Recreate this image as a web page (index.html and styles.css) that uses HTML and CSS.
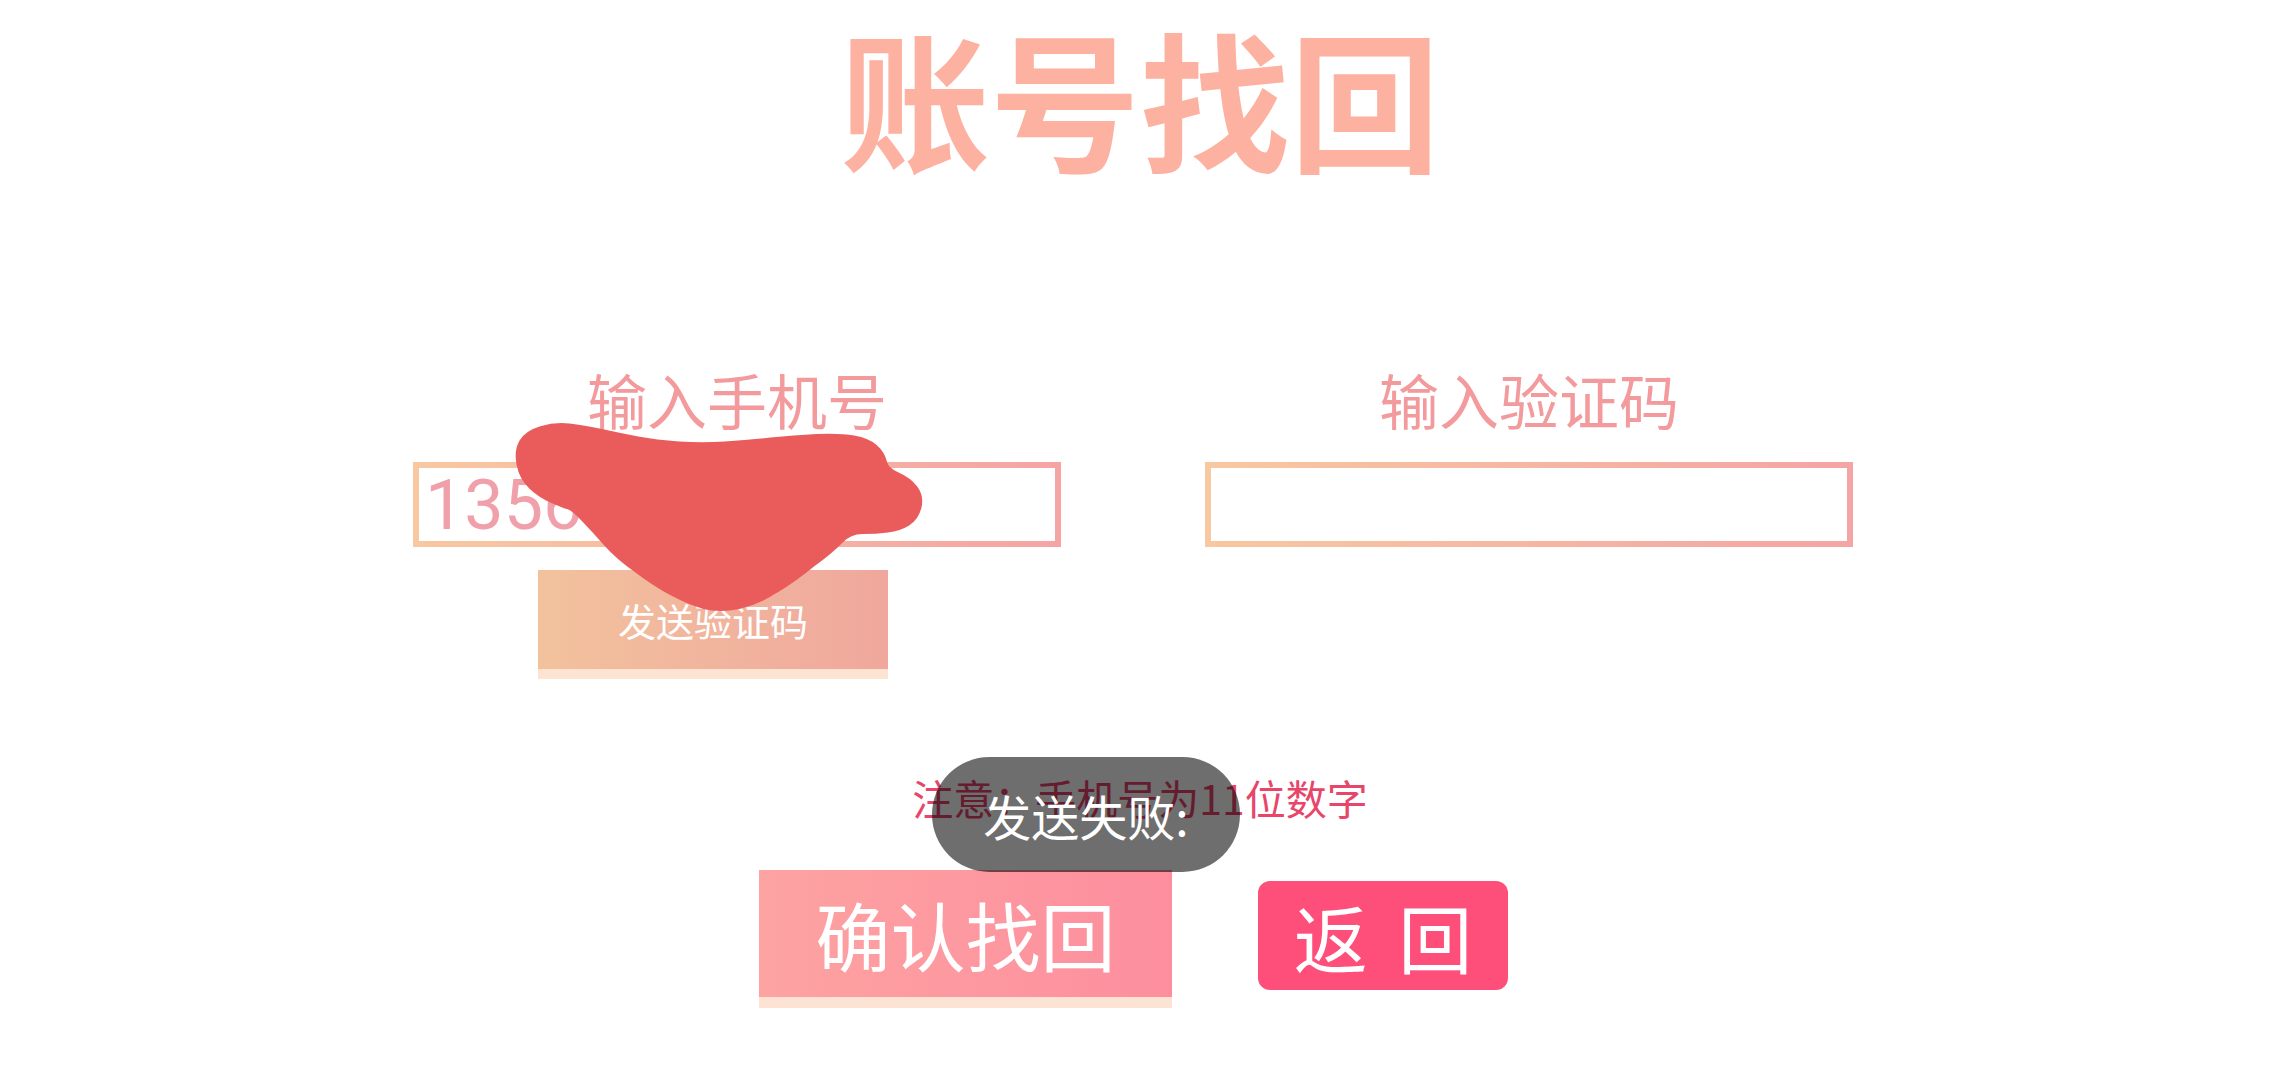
FILE: index.html
```html
<!DOCTYPE html>
<html lang="zh-CN">
<head>
  <meta charset="UTF-8" />
  <title>账号找回</title>
  <link rel="stylesheet" href="styles.css">
</head>
<body>

  <h1 class="judul">账号找回</h1>

  <!-- Form -->
  <div class="form">
    <div class="kolom">
      <p class="label">输入手机号</p>
      <div class="kotak"><span class="isi">1356</span></div>
      <button class="kirim">发送验证码</button>
    </div>
    <div class="kolom">
      <p class="label">输入验证码</p>
      <div class="kotak"></div>
    </div>
  </div>

  <p class="catatan">注意：手机号为11位数字</p>

  <!-- Tombol -->
  <div class="aksi">
    <button class="konfirmasi">确认找回</button>
    <button class="kembali">返 回</button>
  </div>

  <!-- Toast -->
  <div class="toast">发送失败:</div>

  <!-- Coretan sensor -->
  <svg class="coretan" viewBox="0 0 2280 1080" width="2280" height="1080">
    <path d="M523,442.5 Q528,434 541.5,430 Q555,426 569,427.5 Q583,429 601,433 Q619,437 637.5,440.5 Q656,444 679,445.5 Q702,447 725,445.5 Q748,444 771,441.5 Q794,439 817,438 Q840,437 853.5,439.5 Q867,442 874,448 Q881,454 883,462.5 Q885,471 896.5,476 Q908,481 914,489 Q920,497 917.5,507 Q915,517 907,522 Q899,527 887.5,528.5 Q876,530 862.5,530 Q849,530 839.5,540 Q830,550 812,563 Q794,578 775.5,589 Q757,601 738.5,605 Q720,609 704,605 Q690,601 673,592 Q656,583 637.5,569 Q619,556 607.5,543 Q596,530 585,518.5 Q574,507 569,505.5 Q564,504 552.5,499 Q541,494 532,485.5 Q523,477 520.5,464 Q518,451 523,442.5 Z"
      fill="#ea5b5b" stroke="#ea5b5b" stroke-width="8" stroke-linejoin="round"/>
  </svg>

</body>
</html>
```

FILE: styles.css
```css
/* ---------- Dasar ---------- */
body{
  margin:0;
  width:2280px;
  height:1080px;
  position:relative;
  overflow:hidden;
  background:#fff;
  font-family:"Noto Sans CJK SC",sans-serif;
}

.judul{
  margin:6px 0 0;
  text-align:center;
  font-size:150px;
  line-height:180px;
  font-weight:700;
  color:#fdb1a0;
}

/* ---------- Form ---------- */
.form{
  display:grid;
  grid-template-columns:648px 648px;
  column-gap:144px;
  margin:183px 0 0 413px;
}
.kolom{display:flex;flex-direction:column}
.label{
  margin:0 0 33px;
  text-align:center;
  font-size:60px;
  line-height:60px;
  color:#f39a9d;
}
.kotak{
  box-sizing:border-box;
  height:85px;
  border:6px solid transparent;
  background:linear-gradient(#fff,#fff) padding-box,
             linear-gradient(90deg,#f8c8a1,#f4a4a4) border-box;
  display:flex;
  align-items:center;
  padding-left:6px;
}
.isi{
  font-family:Roboto,sans-serif;
  font-size:70px;
  line-height:1;
  color:#f0a0aa;
}

button{
  border:0;
  padding:0;
  color:#fff;
  font-family:"Noto Sans CJK SC",sans-serif;
  cursor:pointer;
}
.kirim{
  align-self:flex-start;
  margin:23px 0 0 125px;
  width:350px;
  height:109px;
  box-sizing:border-box;
  border-bottom:10px solid #fde4d2;
  background:linear-gradient(90deg,#f2c29d,#f0a79d);
  font-size:38px;
}

/* ---------- Catatan ---------- */
.catatan{
  margin:98px 0 0;
  text-align:center;
  font-size:41px;
  line-height:41px;
  color:#e8456b;
}

/* ---------- Tombol bawah ---------- */
.aksi{
  display:flex;
  justify-content:center;
  align-items:flex-start;
  gap:86px;
  margin:52px 0 0 -13px;
}
.konfirmasi{
  width:413px;
  height:138px;
  box-sizing:border-box;
  border-bottom:11px solid #fde3d3;
  background:linear-gradient(90deg,#fda3a2,#fd8e9e);
  font-size:75px;
}
.kembali{
  margin-top:11px;
  width:250px;
  height:109px;
  border-radius:12px;
  background:#fe4f7a;
  font-size:74px;
  word-spacing:14px;
}

/* ---------- Toast ---------- */
.toast{
  position:absolute;
  left:932px;
  top:757px;
  width:308px;
  height:115px;
  border-radius:58px;
  background:rgba(0,0,0,.57);
  color:#fff;
  font-size:48px;
  display:flex;
  align-items:center;
  justify-content:center;
}

.coretan{position:absolute;left:0;top:0;pointer-events:none}
```
